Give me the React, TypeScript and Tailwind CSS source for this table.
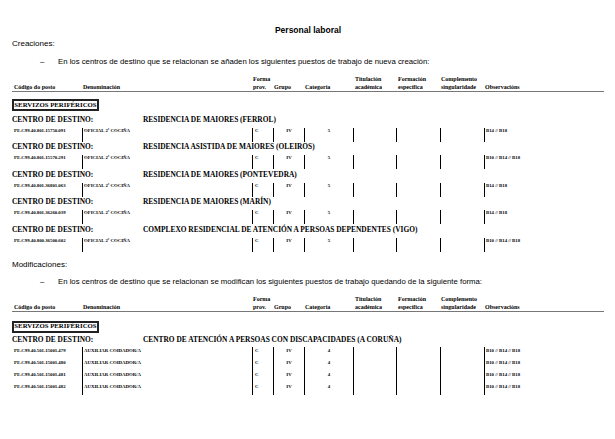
const serif = { fontFamily: '"Liberation Serif", "DejaVu Serif", serif' };

type Row = { code: string; denom: string; cat: string; obs: string };

const creaciones: { centro: string; row: Row }[] = [
  { centro: "RESIDENCIA DE MAIORES (FERROL)", row: { code: "PE.C99.40.801.15750.091", denom: "OFICIAL 2ª COCIÑA", cat: "5", obs: "B14 // B18" } },
  { centro: "RESIDENCIA ASISTIDA DE MAIORES (OLEIROS)", row: { code: "PE.C99.40.801.15570.291", denom: "OFICIAL 2ª COCIÑA", cat: "5", obs: "B10 // B14 // B18" } },
  { centro: "RESIDENCIA DE MAIORES (PONTEVEDRA)", row: { code: "PE.C99.40.801.36801.063", denom: "OFICIAL 2ª COCIÑA", cat: "5", obs: "B14 // B18" } },
  { centro: "RESIDENCIA DE MAIORES (MARÍN)", row: { code: "PE.C99.40.801.36260.039", denom: "OFICIAL 2ª COCIÑA", cat: "5", obs: "B14 // B18" } },
  { centro: "COMPLEXO RESIDENCIAL DE ATENCIÓN A PERSOAS DEPENDENTES (VIGO)", row: { code: "PE.C99.40.800.36500.602", denom: "OFICIAL 2ª COCIÑA", cat: "5", obs: "B10 // B14 // B18" } },
];

const modificaciones: Row[] = ["479", "480", "481", "482"].map((n) => ({
  code: `PE.C99.40.501.15001.${n}`,
  denom: "AUXILIAR COIDADOR/A",
  cat: "4",
  obs: "B10 // B14 // B18",
}));

const cols = "grid grid-cols-[70px_170px_21px_31px_49px_43px_44px_44px_1fr]";

function Header() {
  return (
    <div
      className={`${cols} items-end border-b-[1.5px] border-[#777] text-[6px] font-bold leading-[8px] text-black`}
      style={serif}
    >
      <div className="pl-[2px]">Código do posto</div>
      <div className="pl-[1px]">Denominación</div>
      <div className="pl-[1px]">Forma<br />prov.</div>
      <div className="pl-[1px]">Grupo</div>
      <div className="pl-[1px]">Categoría</div>
      <div className="pl-[2px]">Titulación<br />académica</div>
      <div className="pl-[2px]">Formación<br />específica</div>
      <div className="pl-[1px]">Complemento<br />singularidade</div>
      <div className="pl-[1px]">Observacións</div>
    </div>
  );
}

function DataRow({ row, tall }: { row: Row; tall?: boolean }) {
  const h = tall ? "h-[14px] leading-[6px]" : "h-[12px] leading-[8px]";
  const bar = "border-l border-black";
  return (
    <div className={`${cols} ${h} text-[4.8px] font-bold text-black`} style={serif}>
      <div className="pl-[2px]">{row.code}</div>
      <div className={`${bar} pl-[1px]`}>{row.denom}</div>
      <div className={`${bar} pl-[2px]`}>C</div>
      <div className={`${bar} text-center`}>IV</div>
      <div className={`${bar} text-center`}>{row.cat}</div>
      <div className={bar} />
      <div className={bar} />
      <div className={bar} />
      <div className={`${bar} pl-[1px]`}>{row.obs}</div>
    </div>
  );
}

function Servizos({ className }: { className: string }) {
  return (
    <div className={`flex ${className}`}>
      <div
        className="flex h-[12px] w-[87px] items-center justify-center border-2 border-[#222] text-[6.8px] font-bold leading-none text-black"
        style={serif}
      >
        SERVIZOS PERIFÉRICOS
      </div>
    </div>
  );
}

function Centro({ name, className }: { name: string; className: string }) {
  return (
    <div className={`flex h-[10px] items-center text-[7.4px] font-bold leading-none text-black ${className}`} style={serif}>
      <div className="w-[131px]">CENTRO DE DESTINO:</div>
      <div>{name}</div>
    </div>
  );
}

function Bullet({ text, className }: { text: string; className: string }) {
  return (
    <div className={`flex h-[10px] items-center pl-[28px] text-[7.75px] leading-none ${className}`}>
      <span className="w-[18px]">–</span>
      <span>{text}</span>
    </div>
  );
}

export default function App() {
  return (
    <div
      className="h-[439px] w-[615px] overflow-hidden bg-white pl-[12px] pr-[11px] pt-[25px] text-black"
      style={{ fontFamily: '"Liberation Sans", Arial, sans-serif' }}
    >
      <div className="flex h-[10px] items-center justify-center text-[8.5px] font-bold leading-none">Personal laboral</div>
      <div className="mt-[4px] flex h-[10px] items-center text-[8px] leading-none">Creaciones:</div>
      <Bullet
        className="mt-[8px]"
        text="En los centros de destino que se relacionan se añaden los siguientes puestos de trabajo de nueva creación:"
      />
      <div className="mt-[8px]">
        <Header />
      </div>
      <Servizos className="mt-[7px]" />
      <div className="mt-[3.5px]">
        {creaciones.map((c, i) => (
          <div key={c.row.code} className={i === 0 ? "" : "mt-[0.5px]"}>
            <Centro name={c.centro} className="" />
            <div className="mt-[3px]">
              <DataRow row={c.row} tall />
            </div>
          </div>
        ))}
      </div>

      <div className="mt-[8px] flex h-[10px] items-center text-[8px] leading-none">Modificaciones:</div>
      <Bullet
        className="mt-[7px]"
        text="En los centros de destino que se relacionan se modifican los siguientes puestos de trabajo quedando de la siguiente forma:"
      />
      <div className="mt-[8px]">
        <Header />
      </div>
      <Servizos className="mt-[9px]" />
      <Centro className="mt-[2.5px]" name="CENTRO DE ATENCIÓN A PERSOAS CON DISCAPACIDADES (A CORUÑA)" />
      <div className="mt-[1.5px]">
        {modificaciones.map((r) => (
          <DataRow key={r.code} row={r} />
        ))}
      </div>
    </div>
  );
}
